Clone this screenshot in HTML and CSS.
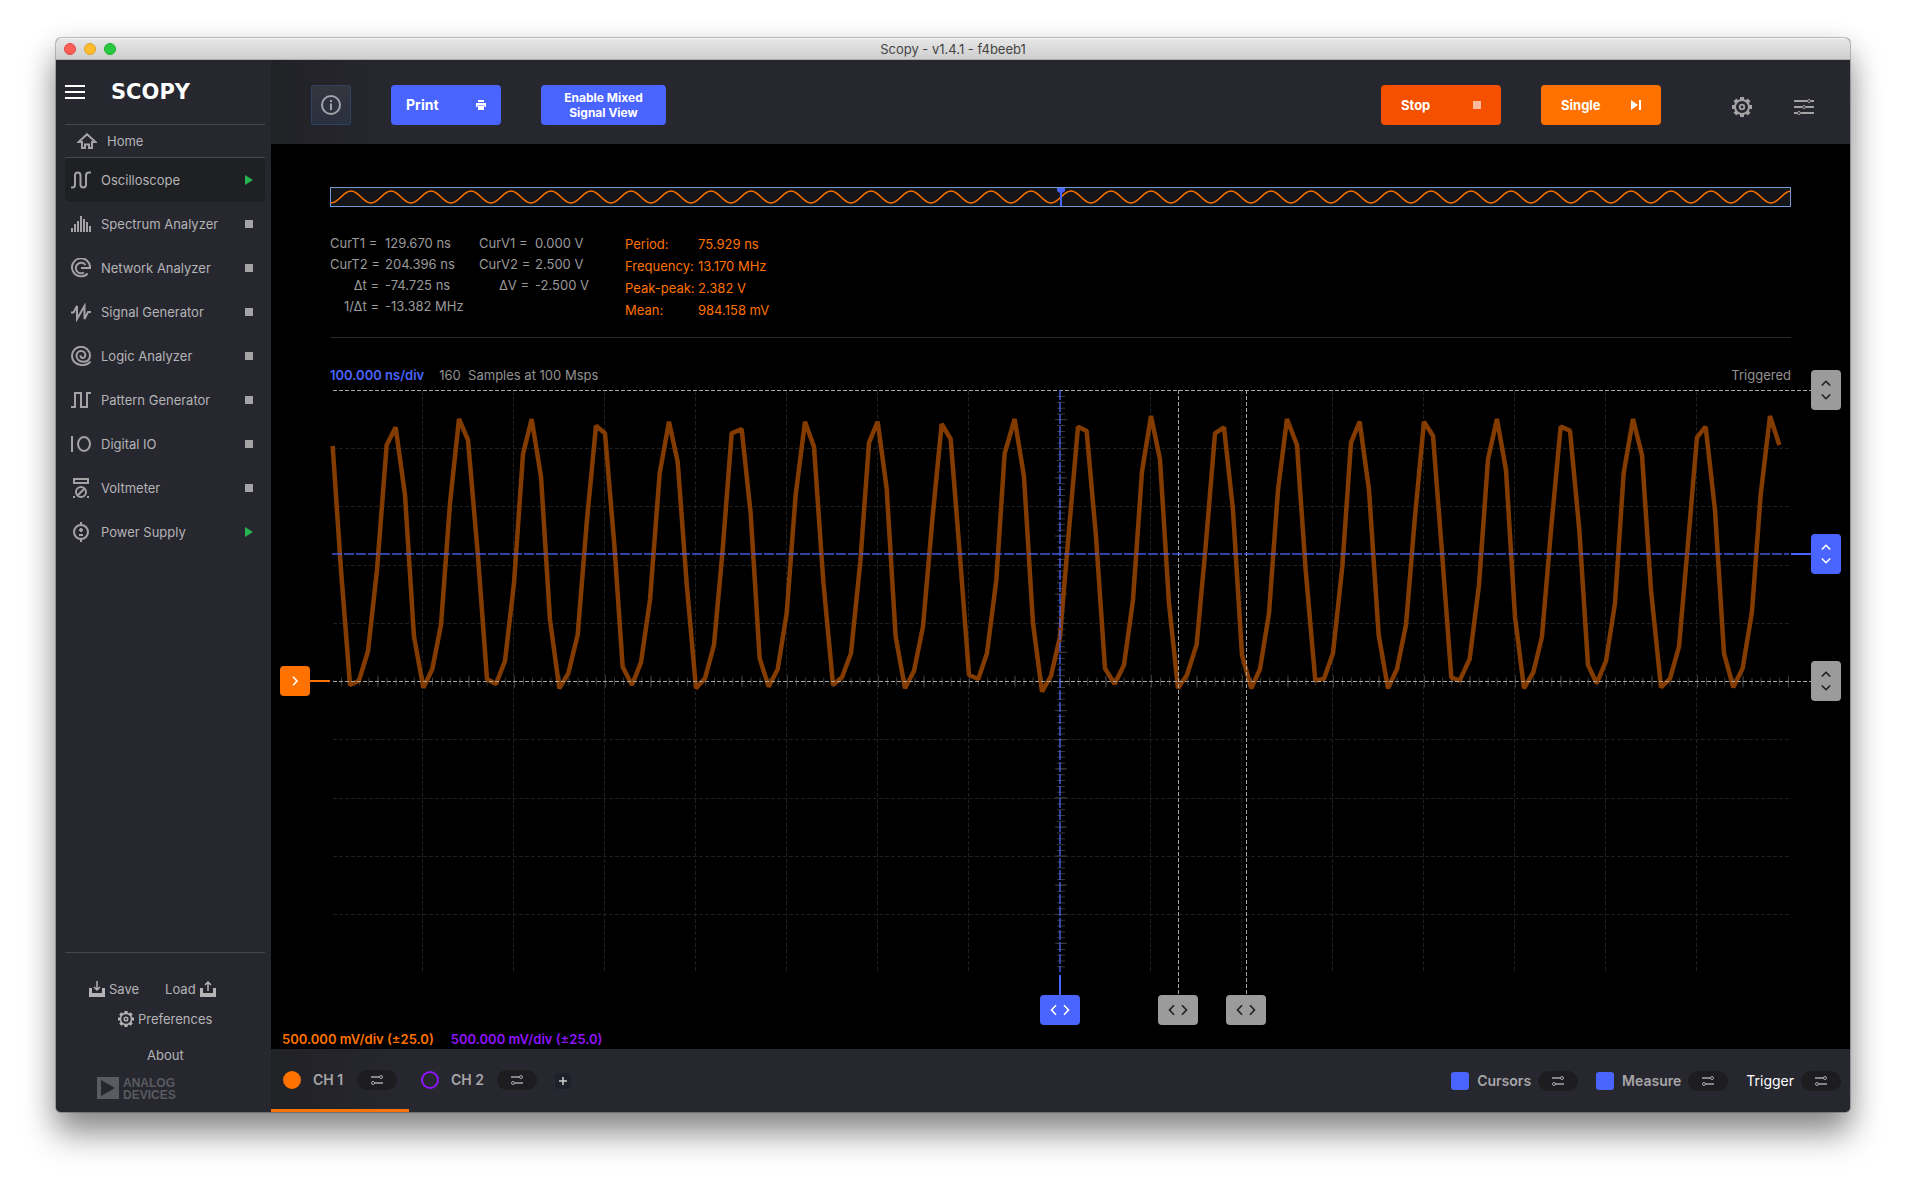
FILE: index.html
```html
<!DOCTYPE html>
<html lang="en">
<head>
<meta charset="utf-8">
<meta name="viewport" content="width=device-width, initial-scale=1">
<title>Scopy - v1.4.1 - f4beeb1</title>
<link rel="stylesheet" href="styles.css">
</head>
<body>
<svg class="defs" width="0" height="0" aria-hidden="true">
  <symbol id="gear" viewBox="0 0 20 20">
    <circle cx="10" cy="10" r="7" fill="none" stroke="currentColor" stroke-width="2"/>
    <circle cx="10" cy="10" r="2.3" fill="none" stroke="currentColor" stroke-width="1.8"/>
    <path d="M10 0v3M10 17v3M0 10h3M17 10h3M2.9 2.9l2.2 2.2M14.9 14.9l2.2 2.2M17.1 2.9l-2.2 2.2M5.1 14.9l-2.2 2.2" stroke="currentColor" stroke-width="4"/>
  </symbol>
  <symbol id="tune" viewBox="0 0 12 12">
    <path d="M0 3h9M3 9h9" fill="none" stroke="currentColor" stroke-width="1.300"/>
    <circle cx="10" cy="3" r="1.500" fill="none" stroke="currentColor"/>
    <circle cx="2" cy="9" r="1.500" fill="none" stroke="currentColor"/>
  </symbol>
  <symbol id="updown" viewBox="0 0 12 24">
    <path d="M1.800 7.500L6 3.300l4.200 4.200M1.800 16.500L6 20.700l4.200-4.200" fill="none" stroke="currentColor" stroke-width="1.600"/>
  </symbol>
  <symbol id="leftright" viewBox="0 0 24 12">
    <path d="M8 1.300L3.500 6 8 10.700M16 1.300L20.500 6 16 10.700" fill="none" stroke="currentColor" stroke-width="1.600"/>
  </symbol>
</svg>

<div class="window">
  <header class="titlebar">
    <div class="lights"><button class="light close" aria-label="Close"></button><button class="light minimize" aria-label="Minimize"></button><button class="light expand" aria-label="Zoom"></button></div>
    <h1 class="title">Scopy - v1.4.1 - f4beeb1</h1>
  </header>

  <div class="app">
    <aside class="sidebar">
      <div class="brand">
        <button class="menu" aria-label="Menu"><svg width="20" height="14" viewBox="0 0 20 14"><path d="M0 1h20M0 7h20M0 13h20" stroke="#fff" stroke-width="2"/></svg></button>
        <span class="logo">SCOPY</span>
      </div>
      <a class="home" href="#home">
        <svg width="20" height="16" viewBox="0 0 20 16"><path d="M1.6 9L10 1.2 18.4 9H15v6h-3v-3.4H8V15H5V9z" fill="none" stroke="currentColor" stroke-width="2"/></svg>
        Home
      </a>
      <nav class="tools">
        <a class="tool active" href="#oscilloscope"><svg class="icon" viewBox="0 0 20 20"><path d="M0 17.5h1.500c2 0 2.500-1 2.500-3V5.500c0-2 1-3 2.700-3s2.800 1 2.800 3v9c0 2 1 3 2.700 3s2.800-1 2.800-3v-9c0-2 1-3 3-3h2" fill="none" stroke="currentColor" stroke-width="2"/></svg>Oscilloscope<span class="status running"></span></a>
        <a class="tool" href="#spectrum"><svg class="icon" viewBox="0 0 20 20"><path d="M1 18v-4M4 18v-8M7 18V7M10 18V2M13 18V5M16 18V8M19 18v-6" fill="none" stroke="currentColor" stroke-width="2"/></svg>Spectrum Analyzer<span class="status"></span></a>
        <a class="tool" href="#network"><svg class="icon" viewBox="0 0 20 20"><path d="M16.600 15.500A9 9 0 1 1 19 10H10M14.500 7A5.300 5.300 0 1 0 13 14.500" fill="none" stroke="currentColor" stroke-width="2"/></svg>Network Analyzer<span class="status"></span></a>
        <a class="tool" href="#signal"><svg class="icon" viewBox="0 0 20 20"><path d="M0 10.500h2.500L6 4v13l7.500-13v13L17 10h3" fill="none" stroke="currentColor" stroke-width="2"/></svg>Signal Generator<span class="status"></span></a>
        <a class="tool" href="#logic"><svg class="icon" viewBox="0 0 20 20"><path d="M19.500 15.500C17 18.300 13.500 19.500 10 19 4.500 18.500 1 14.500 1 10a9 9 0 0 1 18-.5c0 4-3 6.500-7 6.300-3.500-.2-6.500-2.500-6.500-6C5.500 7 7.500 5 10 5c2.700 0 4.300 2 4.300 4.200 0 2-1.600 3-3 2.700-1.300-.2-1.900-1.400-1.500-2.700" fill="none" stroke="currentColor" stroke-width="2"/></svg>Logic Analyzer<span class="status"></span></a>
        <a class="tool" href="#pattern"><svg class="icon" viewBox="0 0 20 20"><path d="M0 17h4V3h6v14h6V3h4" fill="none" stroke="currentColor" stroke-width="2"/></svg>Pattern Generator<span class="status"></span></a>
        <a class="tool" href="#digital"><svg class="icon" viewBox="0 0 20 20"><path d="M1 2v16" stroke="currentColor" stroke-width="2"/><ellipse cx="13" cy="10" rx="6" ry="7" fill="none" stroke="currentColor" stroke-width="2"/></svg>Digital IO<span class="status"></span></a>
        <a class="tool" href="#voltmeter"><svg class="icon" viewBox="0 0 20 20"><path d="M3 1h14v4H3zM2 19h2M16 19h2M6.500 17.500l7-7" fill="none" stroke="currentColor" stroke-width="2"/><circle cx="10" cy="14" r="5" fill="none" stroke="currentColor" stroke-width="2"/></svg>Voltmeter<span class="status"></span></a>
        <a class="tool" href="#power"><svg class="icon" viewBox="0 0 20 20"><circle cx="10" cy="10" r="7" fill="none" stroke="currentColor" stroke-width="2"/><path d="M10 0v4M10 16v4M8 13h4M8 8h4M10 6v4" stroke="currentColor" stroke-width="2"/></svg>Power Supply<span class="status running"></span></a>
      </nav>
      <footer class="side-foot">
        <div class="files">
          <button class="plain">
            <svg width="16" height="16" viewBox="0 0 16 16"><path d="M0 7h3v5h10V7h3v9H0z" fill="currentColor"/><path d="M8 0v9M5 6l3 3 3-3" fill="none" stroke="currentColor" stroke-width="1.500"/></svg>Save</button>
          <button class="plain">Load
            <svg width="16" height="16" viewBox="0 0 16 16"><path d="M0 7h3v5h10V7h3v9H0z" fill="currentColor"/><path d="M8 10V1M5 4l3-3 3 3" fill="none" stroke="currentColor" stroke-width="1.500"/></svg></button>
        </div>
        <button class="plain prefs"><svg width="16" height="16"><use href="#gear"/></svg>Preferences</button>
        <button class="plain about">About</button>
        <div class="maker">
          <svg width="22" height="22" viewBox="0 0 22 22"><path d="M0 0h22v22H0zM4 3v16l14-8z" fill="currentColor" fill-rule="evenodd"/></svg>
          <span>ANALOG<br>DEVICES</span>
        </div>
      </footer>
    </aside>

    <main class="main">
      <div class="toolbar">
        <button class="info" aria-label="Information"><svg width="20" height="20" viewBox="0 0 20 20"><circle cx="10" cy="10" r="9" fill="none" stroke="currentColor" stroke-width="2"/><path d="M10 5v2M10 8.500v6.500" stroke="currentColor" stroke-width="2"/></svg></button>
        <button class="btn print">Print<svg width="10" height="10" viewBox="0 0 10 10"><path d="M2 0h6v2H2zM0 3h10v4H8.500V5.500h-7V7H0zM2 6h6v4H2z" fill="#fff"/></svg></button>
        <button class="btn mixed">Enable Mixed Signal View</button>
        <button class="btn stop">Stop<svg width="8" height="8"><path d="M0 0h8v8H0z" fill="#ffb99c"/></svg></button>
        <button class="btn single">Single<svg width="10" height="10" viewBox="0 0 10 10"><path d="M0 0l7 5-7 5zM8 0h2v10H8z" fill="#fff"/></svg></button>
        <button class="ghost" aria-label="Settings"><svg width="20" height="20"><use href="#gear"/></svg></button>
        <button class="ghost" aria-label="Channel settings"><svg width="20" height="16" viewBox="0 0 20 16"><path d="M0 2h13M17 2h3M0 8h8M12 8h8M0 14h3M7 14h13" stroke="currentColor" stroke-width="2"/><path d="M13.500 2a1.500 1.500 0 1 0 3 0 1.500 1.500 0 1 0-3 0M8.500 8a1.500 1.500 0 1 0 3 0 1.500 1.500 0 1 0-3 0M3.500 14a1.500 1.500 0 1 0 3 0 1.500 1.500 0 1 0-3 0" fill="none" stroke="currentColor"/></svg></button>
      </div>

      <section class="scope">
        <div class="inset">
          <div class="overview">
            <svg width="100%" height="18">
              <defs><pattern id="sine" width="40" height="18" patternUnits="userSpaceOnUse"><path d="M-20 3C-12 3-8 15 0 15S12 3 20 3 32 15 40 15 52 3 60 3" fill="none" stroke="#ff7200" stroke-width="1.500"/></pattern></defs>
              <rect width="100%" height="18" fill="url(#sine)"/>
            </svg>
            <svg class="marker" width="8" height="18" viewBox="0 0 8 18"><path d="M0 0h8v3L5 5v13H3V5L0 3z" fill="#4a64ff"/></svg>
          </div>

          <div class="readouts">
            <dl class="cursor-time">
              <dt class="left">CurT1 =</dt><dd>129.670 ns</dd>
              <dt class="left">CurT2 =</dt><dd>204.396 ns</dd>
              <dt>Δt =</dt><dd>-74.725 ns</dd>
              <dt>1/Δt =</dt><dd>-13.382 MHz</dd>
            </dl>
            <dl class="cursor-volt">
              <dt class="left">CurV1 =</dt><dd>0.000 V</dd>
              <dt class="left">CurV2 =</dt><dd>2.500 V</dd>
              <dt>ΔV =</dt><dd>-2.500 V</dd>
            </dl>
            <dl class="measures">
              <dt class="left">Period:</dt><dd>75.929 ns</dd>
              <dt class="left">Frequency:</dt><dd>13.170 MHz</dd>
              <dt class="left">Peak-peak:</dt><dd>2.382 V</dd>
              <dt class="left">Mean:</dt><dd>984.158 mV</dd>
            </dl>
          </div>

          <div class="timebase">
            <strong>100.000 ns/div</strong>
            <span>160&nbsp; Samples at 100 Msps</span>
            <span class="triggered">Triggered</span>
          </div>
        </div>

        <div class="plot">
          <svg class="canvas" viewBox="0 0 1579 640" preserveAspectRatio="none">
            <g class="grid">
              <path d="M151.500 1v581M242.500 1v581M333.500 1v581M424.500 1v581M515.500 1v581M606.500 1v581M697.500 1v581M879.500 1v581M970.500 1v581M1061.500 1v581M1152.500 1v581M1243.500 1v581M1334.500 1v581M1425.500 1v581"/>
              <path d="M62 58.500h1456M62 116.500h1456M62 175.500h1456M62 233.500h1456M62 349.500h1456M62 408.500h1456M62 466.500h1456M62 524.500h1456"/>
            </g>
            <g class="ticks">
              <path d="M70 291.500h1448" stroke-width="8" stroke-dasharray="1 8.100"/>
              <path d="M106.500 291.500h1412" stroke-width="12" stroke-dasharray="1 44.500"/>
              <path d="M790 6v576" stroke-width="8" stroke-dasharray="1 4.820"/>
              <path d="M790 29v553" stroke-width="12" stroke-dasharray="1 28.100"/>
            </g>
            <polyline class="trace" transform="translate(-1 -20) scale(.33333)" points="188,228 213,600 240,945 267,932 294,843 321,600 350,225 377,172 405,375 432,800 460,953 487,897 513,765 540,400 567,147 594,210 624,560 651,927 678,942 705,873 732,640 759,253 785,147 813,320 840,750 868,955 895,910 923,795 950,460 978,167 1005,190 1033,525 1058,890 1086,945 1113,877 1140,690 1169,310 1197,155 1223,275 1250,640 1278,955 1305,925 1332,825 1358,540 1385,190 1415,177 1442,430 1469,865 1496,950 1523,898 1550,730 1577,375 1605,155 1632,230 1660,635 1689,945 1716,922 1743,850 1771,575 1797,218 1823,155 1850,355 1877,800 1905,955 1932,903 1959,770 1987,450 2015,162 2042,207 2070,560 2097,915 2125,927 2151,850 2179,630 2204,250 2234,147 2262,320 2289,760 2316,965 2343,918 2370,800 2397,480 2424,170 2450,183 2478,500 2505,895 2534,942 2562,885 2589,690 2616,305 2643,138 2670,268 2697,700 2724,955 2751,915 2780,823 2807,530 2835,190 2862,172 2889,420 2916,855 2944,955 2970,897 2997,730 3024,360 3051,147 3081,225 3107,600 3136,932 3162,926 3189,850 3217,590 3243,218 3269,155 3297,360 3326,795 3354,955 3381,897 3408,765 3435,440 3462,155 3489,197 3517,560 3544,923 3569,932 3599,867 3627,645 3654,268 3681,147 3708,300 3735,740 3762,955 3790,907 3816,800 3844,470 3872,170 3900,182 3928,480 3954,885 3980,940 4008,873 4035,700 4061,310 4089,147 4116,255 4143,660 4173,952 4200,926 4227,830 4254,520 4281,202 4307,170 4335,420 4362,850 4390,952 4418,895 4446,725 4472,375 4500,138 4528,225"/>
            <g class="cursors"><path d="M62 .5H1540M62 291.500H1540M907.500 0V605M975.500 0V605"/></g>
            <g class="trigger">
              <path class="dashed" d="M61 164H1518M789 0V582"/>
              <path d="M1520 164h20M789 585v20"/>
            </g>
            <path class="offset" d="M38 291h21"/>
          </svg>
          <button class="handle side v2" aria-label="Voltage cursor 2"><svg width="12" height="24"><use href="#updown"/></svg></button>
          <button class="handle side level" aria-label="Trigger level"><svg width="12" height="24"><use href="#updown"/></svg></button>
          <button class="handle side v1" aria-label="Voltage cursor 1"><svg width="12" height="24"><use href="#updown"/></svg></button>
          <button class="handle channel" aria-label="Channel 1 offset"><svg width="12" height="12" viewBox="0 0 12 12"><path d="M4 1.800L8 6l-4 4.200" fill="none" stroke="currentColor" stroke-width="1.600"/></svg></button>
          <button class="handle foot delay" aria-label="Trigger position"><svg width="24" height="12"><use href="#leftright"/></svg></button>
          <button class="handle foot t1" aria-label="Time cursor 1"><svg width="24" height="12"><use href="#leftright"/></svg></button>
          <button class="handle foot t2" aria-label="Time cursor 2"><svg width="24" height="12"><use href="#leftright"/></svg></button>
        </div>
        <div class="scales"><span class="ch1">500.000 mV/div (±25.0)</span><span class="ch2">500.000 mV/div (±25.0)</span></div>
      </section>

      <div class="bottombar">
        <div class="channel-tab selected">
          <label><input class="dot one" type="checkbox" checked>CH 1</label>
          <button class="pill" aria-label="Channel 1 settings"><svg width="12" height="12"><use href="#tune"/></svg></button>
        </div>
        <div class="channel-tab">
          <label><input class="dot two" type="checkbox">CH 2</label>
          <button class="pill" aria-label="Channel 2 settings"><svg width="12" height="12"><use href="#tune"/></svg></button>
        </div>
        <button class="add" aria-label="Add channel"><svg width="8" height="8" viewBox="0 0 8 8"><path d="M4 0v8M0 4h8" stroke="currentColor" stroke-width="1.500"/></svg></button>
        <div class="options">
          <div class="option"><label><input class="box" type="checkbox" checked>Cursors</label><button class="pill" aria-label="Cursor settings"><svg width="12" height="12"><use href="#tune"/></svg></button></div>
          <div class="option"><label><input class="box" type="checkbox" checked>Measure</label><button class="pill" aria-label="Measure settings"><svg width="12" height="12"><use href="#tune"/></svg></button></div>
          <div class="option"><span class="plain-label">Trigger</span><button class="pill" aria-label="Trigger settings"><svg width="12" height="12"><use href="#tune"/></svg></button></div>
        </div>
      </div>
    </main>
  </div>
</div>
</body>
</html>
```
FILE: styles.css
```css
* { box-sizing: border-box; }

body {
  margin: 0;
  padding: 38px 56px 74px;
  min-height: 100vh;
  display: flex;
  background: #fff;
  color: #a6a6a8;
  font: 13px/20px Inter, "Liberation Sans", sans-serif;
}

button {
  margin: 0;
  padding: 0;
  border: 0;
  background: none;
  color: inherit;
  font: inherit;
  cursor: pointer;
}

a { color: inherit; text-decoration: none; }
svg { display: block; flex: none; }
.defs { position: absolute; }

.window {
  flex: 1;
  min-width: 0;
  display: flex;
  flex-direction: column;
  border-radius: 5px;
  overflow: hidden;
  background: #27272f;
  box-shadow: 0 0 0 1px rgba(0, 0, 0, .22), 0 22px 34px rgba(0, 0, 0, .4), 0 8px 28px rgba(0, 0, 0, .16);
}

.titlebar {
  height: 22px;
  flex: none;
  display: grid;
  grid-template-columns: 1fr auto 1fr;
  align-items: center;
  background: linear-gradient(#e6e6e6, #cecece);
  border-top: 1px solid #f4f4f4;
  border-bottom: 1px solid #acacac;
}
.lights { display: flex; gap: 8px; padding-left: 8px; }
.light { width: 12px; height: 12px; border-radius: 50%; }
.close { background: #ff5f57; border: 1px solid #e14640; }
.minimize { background: #ffbd2e; border: 1px solid #dfa023; }
.expand { background: #28c940; border: 1px solid #1dad2b; }
.title { margin: 0; color: #444; font-size: 13px; font-weight: 400; line-height: 20px; }

.app { flex: 1; min-height: 0; display: flex; }

.sidebar {
  width: 215px;
  flex: none;
  padding: 0 6px 0 9px;
  display: flex;
  flex-direction: column;
  background: #27272f;
  color: #b4b4b6;
}
.brand { height: 64px; display: flex; align-items: center; gap: 26px; }
.logo { color: #fff; font: bold 21px/20px "DejaVu Sans", sans-serif; }
.home {
  height: 34px;
  padding-left: 12px;
  display: flex;
  align-items: center;
  gap: 10px;
  border-top: 1px solid #48484c;
  border-bottom: 1px solid #48484c;
}
.tool { height: 44px; padding: 0 12px 0 6px; display: flex; align-items: center; gap: 10px; border-radius: 5px; }
.tool svg, .home svg { color: #a3a3a5; }
.active { background: #1f2024; }
.icon { width: 20px; height: 20px; }
.status { width: 8px; height: 8px; margin-left: auto; background: #a3a3a5; }
.running { height: 10px; background: #27b34f; clip-path: polygon(0 0, 100% 50%, 0 100%); }

.side-foot {
  margin-top: auto;
  padding: 26px 0 11px;
  display: flex;
  flex-direction: column;
  align-items: flex-start;
  border-top: 1px solid #48484c;
}
.plain { display: flex; align-items: center; gap: 4px; }
.files { display: flex; gap: 26px; padding-left: 24px; }
.prefs { margin: 10px 0 0 53px; }
.about { margin: 16px 0 0 82px; }
.maker { margin: 12px 0 0 32px; display: flex; gap: 4px; color: #5a5b60; font: bold 12px/12px "Liberation Sans", sans-serif; }

.main { flex: 1; min-width: 0; display: flex; flex-direction: column; }

.toolbar {
  height: 84px;
  flex: none;
  padding: 6px 36px 0 40px;
  display: flex;
  align-items: center;
  gap: 40px;
  background: linear-gradient(90deg, #212226, #27272f 120px);
}
.info {
  width: 40px;
  height: 40px;
  display: grid;
  place-items: center;
  border: 1px solid #2f4361;
  border-radius: 2px;
  background: linear-gradient(#35353f, #29303f);
  color: #a0a3aa;
}
.btn {
  height: 40px;
  padding: 0 15px;
  display: flex;
  align-items: center;
  justify-content: space-between;
  border-radius: 4px;
  background: #4a64ff;
  color: #fff;
  font-size: 13px;
  font-weight: 700;
}
.print { width: 110px; font-size: 14px; }
.mixed { width: 125px; justify-content: center; text-align: center; font-size: 12px; line-height: 15px; }
.stop, .single { width: 120px; padding: 0 20px; }
.stop { margin-left: auto; background: #f55000; }
.single { background: #ff7200; }
.ghost { margin: 4px 0 0 2px; color: #a3a3a5; }
.single + .ghost { margin-left: 31px; }

.scope { flex: 1; min-height: 0; display: flex; flex-direction: column; background: #000; }
.inset { padding: 43px 59px 0; }
.overview { position: relative; border: 1px solid #7399d1; background: #151517; }
.marker { position: absolute; top: 0; left: calc(50% - 4px); }

.readouts { margin-top: 26px; height: 104px; display: flex; color: #9a9a9a; }
dl { margin: 0; display: grid; column-gap: 6px; align-content: start; grid-auto-rows: 21px; line-height: 21px; white-space: nowrap; }
dt { text-align: right; }
dt.left { text-align: left; }
dd { margin: 0; }
.cursor-time, .cursor-volt { grid-template-columns: 49px auto; }
.cursor-time { width: 149px; justify-content: start; }
.cursor-volt { width: 146px; grid-template-columns: 50px auto; justify-content: start; }
.measures { grid-template-columns: 70px auto; column-gap: 3px; grid-auto-rows: 22px; line-height: 22px; color: #ff7200; }

.timebase {
  padding: 27px 0 5px;
  display: flex;
  gap: 15px;
  border-top: 1px solid #2b2b2b;
  color: #929292;
}
.timebase strong { color: #4a64ff; font-weight: 600; }
.triggered { margin-left: auto; }

.plot { position: relative; flex: 1; min-height: 0; }
.canvas { position: absolute; width: 100%; height: 100%; fill: none; }
.canvas path, .canvas polyline { vector-effect: non-scaling-stroke; }
.grid { stroke: #1f1f1f; stroke-dasharray: 4 2; }
.ticks { stroke: #3a3a3a; }
.trace { stroke: #843b00; stroke-width: 4.5; stroke-linejoin: bevel; }
.cursors { stroke: #a6a6a6; stroke-dasharray: 4 2; }
.trigger { stroke: #4a64ff; stroke-width: 2; }
.dashed { stroke-dasharray: 10 2; stroke-opacity: .65; }
.offset { stroke: #ff7200; stroke-width: 2; }

.handle {
  position: absolute;
  display: grid;
  place-items: center;
  border-radius: 4px;
  background: #9b9b9b;
  color: #1d1d1d;
}
.side { right: 9px; width: 30px; height: 40px; margin-top: -20px; }
.foot { width: 40px; height: 30px; bottom: 5px; margin-left: -20px; }
.v2 { top: 0; }
.level { top: 25.6%; background: #4a64ff; color: #fff; }
.v1 { top: 45.5%; }
.channel { left: 9px; top: 45.5%; width: 30px; height: 30px; margin-top: -15px; background: #ff7200; color: #fff; }
.delay { left: 49.95%; background: #4a64ff; color: #fff; }
.t1 { left: 57.44%; }
.t2 { left: 61.75%; }

.scales { height: 19px; padding-left: 11px; display: flex; gap: 17px; line-height: 18px; font-weight: 600; }
.ch1 { color: #ff7200; }
.ch2 { color: #9013fe; }

.bottombar {
  height: 63px;
  flex: none;
  display: flex;
  padding-right: 9px;
  align-items: center;
  background: #27272f;
  font-size: 14px;
  font-weight: 600;
}
.channel-tab { width: 140px; height: 63px; padding: 2px 12px 0; display: flex; align-items: center; justify-content: space-between; border-bottom: 3px solid transparent; }
.selected { width: 138px; background: linear-gradient(90deg, #212226, #27272f); border-color: #ff7200; }
label { display: flex; align-items: center; gap: 12px; }
input { margin: 0; appearance: none; width: 18px; height: 18px; }
.dot { border: 2px solid; border-radius: 50%; }
.one { border-color: #ff7200; background: #ff7200; }
.two { border-color: #9013fe; }
.box { border-radius: 3px; background: #4a64ff; }
.pill { width: 40px; height: 20px; display: grid; place-items: center; border-radius: 10px; background: #1d1d20; }
.add { width: 16px; height: 16px; margin-left: 6px; display: grid; place-items: center; border-radius: 2px; background: #1f212a; color: #d0d0d0; }
.options { margin-left: auto; display: flex; gap: 18px; }
.option { display: flex; align-items: center; gap: 7px; }
.option label { gap: 8px; }
.plain-label { color: #fff; font-weight: 400; }
```
